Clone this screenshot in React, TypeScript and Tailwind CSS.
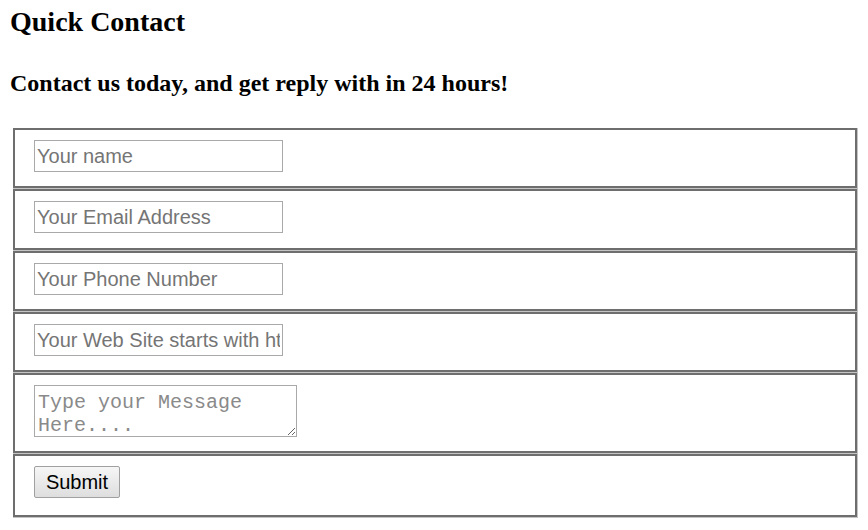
import React from "react";

const rowCls =
  "bg-white border-2 border-[#6e6e6e] pl-[19px] pt-[10px]";

export default function App() {
  return (
    <div className="min-h-[530px] w-[868px] bg-white text-black">
      <h2
        className="ml-[10px] pt-[6px] text-[28px] leading-[32px] font-bold"
        style={{ fontFamily: '"Liberation Serif", "Times New Roman", serif' }}
      >
        Quick Contact
      </h2>
      <h3
        className="ml-[10px] mt-[31px] text-[24px] leading-[28px] font-bold"
        style={{ fontFamily: '"Liberation Serif", "Times New Roman", serif' }}
      >
        Contact us today, and get reply with in 24 hours!
      </h3>
      <div className="ml-[13px] mt-[31px] w-[845px] bg-[#c4c4c4] pr-px pb-px flex flex-col gap-px">
        <div className={`${rowCls} h-[60px]`}>
          <input
            type="text"
            placeholder="Your name"
            className="block w-[249px] h-[32px] border border-[#a9a9a9] px-[2px] text-[20px] placeholder:text-[#757575] outline-none font-['Liberation_Sans',Arial,sans-serif]"
          />
        </div>
        <div className={`${rowCls} h-[61px]`}>
          <input
            type="text"
            placeholder="Your Email Address"
            className="block w-[249px] h-[32px] border border-[#a9a9a9] px-[2px] text-[20px] placeholder:text-[#757575] outline-none font-['Liberation_Sans',Arial,sans-serif]"
          />
        </div>
        <div className={`${rowCls} h-[60px]`}>
          <input
            type="text"
            placeholder="Your Phone Number"
            className="block w-[249px] h-[32px] border border-[#a9a9a9] px-[2px] text-[20px] placeholder:text-[#757575] outline-none font-['Liberation_Sans',Arial,sans-serif]"
          />
        </div>
        <div className={`${rowCls} h-[60px]`}>
          <input
            type="text"
            placeholder="Your Web Site starts with http://"
            className="block w-[249px] h-[32px] border border-[#a9a9a9] px-[2px] text-[20px] placeholder:text-[#757575] outline-none font-['Liberation_Sans',Arial,sans-serif]"
          />
        </div>
        <div className={`${rowCls} h-[80px]`}>
          <textarea
            placeholder="Type your Message Here...."
            className="block w-[263px] h-[52px] border border-[#a9a9a9] px-[3px] pt-[5px] pb-0 text-[20px] leading-[23px] placeholder:text-[#8a8a8a] outline-none font-['Liberation_Mono','Courier_New',monospace]"
          />
        </div>
        <div className={`${rowCls} h-[63px]`}>
          <button
            type="button"
            className="block w-[86px] h-[32px] border border-[#a0a0a0] rounded-[2px] bg-gradient-to-b from-[#f6f6f6] to-[#dedede] text-[20px] leading-[24px] text-black font-['Liberation_Sans',Arial,sans-serif]"
          >
            Submit
          </button>
        </div>
      </div>
    </div>
  );
}
